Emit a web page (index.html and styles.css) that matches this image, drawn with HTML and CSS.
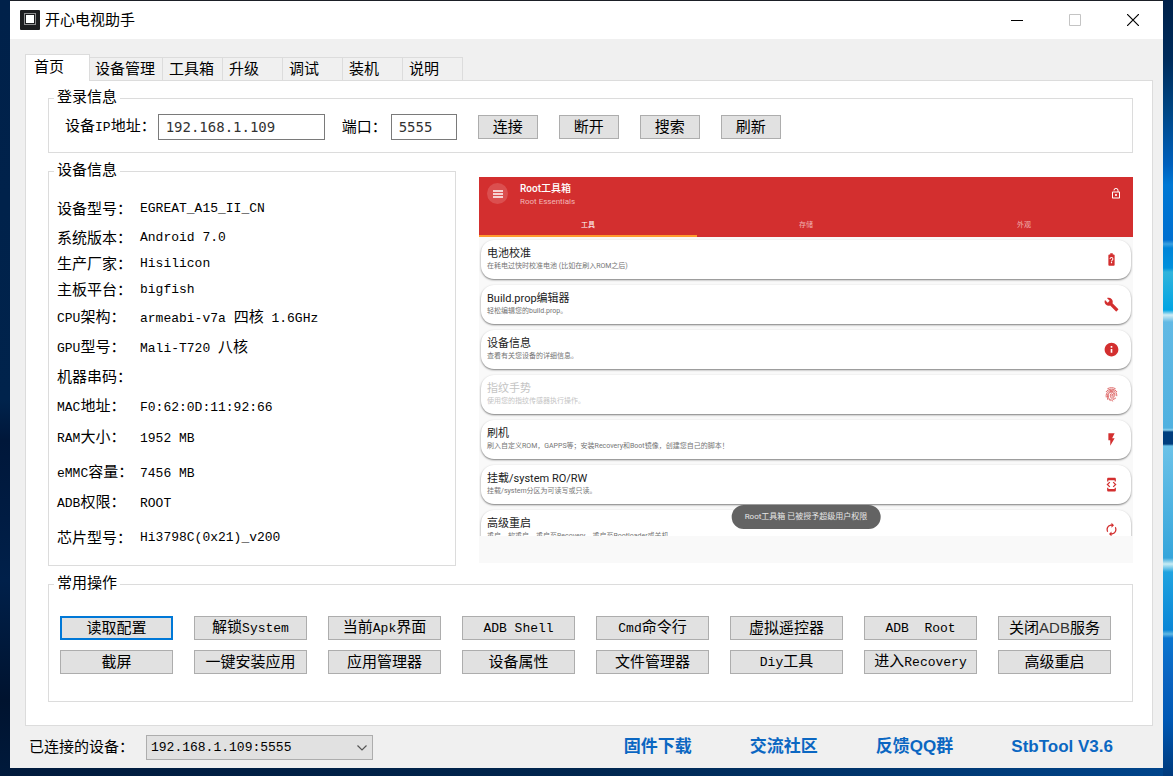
FILE: index.html
```html
<!DOCTYPE html>
<html lang="zh-CN">
<head>
<meta charset="utf-8">
<title>开心电视助手</title>
<link rel="stylesheet" href="styles.css">
</head>
<body>
<div class="window">
  <header class="titlebar">
    <svg class="app-icon" viewBox="0 0 20 20"><rect width="20" height="20" rx="1" fill="#1c1d1f"/><rect x="4.500" y="3.500" width="11" height="11" fill="none" stroke="#fff" stroke-dasharray="1 1"/><rect x="6" y="5" width="8" height="8" fill="#fff"/></svg>
    <h1>开心电视助手</h1>
    <div class="caption-buttons">
      <button aria-label="最小化"><svg viewBox="0 0 12 12"><path d="M0 6.5h12" stroke="#000"/></svg></button>
      <button aria-label="最大化" disabled><svg viewBox="0 0 12 12"><path d="M.5.5h11v11H.5z" stroke="#c4c4c4"/></svg></button>
      <button aria-label="关闭"><svg viewBox="0 0 12 12"><path d="M0 0l12 12M12 0L0 12" stroke="#000" stroke-width="1.2"/></svg></button>
    </div>
  </header>

  <nav class="tabs" role="tablist">
    <button class="tab active" role="tab" aria-selected="true">首页</button>
    <button class="tab wide" role="tab">设备管理</button>
    <button class="tab" role="tab">工具箱</button>
    <button class="tab" role="tab">升级</button>
    <button class="tab" role="tab">调试</button>
    <button class="tab" role="tab">装机</button>
    <button class="tab" role="tab">说明</button>
  </nav>

  <main class="page">
    <section class="group login">
      <h2 class="legend">登录信息</h2>
      <label for="ip">设备<span class="en">IP</span>地址：</label>
      <input id="ip" class="field ip" value="192.168.1.109">
      <label for="port">端口：</label>
      <input id="port" class="field port" value="5555">
      <div class="login-actions">
        <button class="btn">连接</button>
        <button class="btn">断开</button>
        <button class="btn">搜索</button>
        <button class="btn">刷新</button>
      </div>
    </section>

    <div class="middle">
      <section class="group device">
        <h2 class="legend">设备信息</h2>
        <dl class="info">
          <dt>设备型号：</dt><dd><span class="en">EGREAT_A15_II_CN</span></dd>
          <dt>系统版本：</dt><dd><span class="en">Android 7.0</span></dd>
          <dt>生产厂家：</dt><dd><span class="en">Hisilicon</span></dd>
          <dt>主板平台：</dt><dd><span class="en">bigfish</span></dd>
          <dt><span class="en">CPU</span>架构：</dt><dd><span class="en">armeabi-v7a </span>四核<span class="en"> 1.6GHz</span></dd>
          <dt><span class="en">GPU</span>型号：</dt><dd><span class="en">Mali-T720 </span>八核</dd>
          <dt>机器串码：</dt><dd></dd>
          <dt><span class="en">MAC</span>地址：</dt><dd><span class="en">F0:62:0D:11:92:66</span></dd>
          <dt><span class="en">RAM</span>大小：</dt><dd><span class="en">1952 MB</span></dd>
          <dt><span class="en">eMMC</span>容量：</dt><dd><span class="en">7456 MB</span></dd>
          <dt><span class="en">ADB</span>权限：</dt><dd><span class="en">ROOT</span></dd>
          <dt>芯片型号：</dt><dd><span class="en">Hi3798C(0x21)_v200</span></dd>
        </dl>
      </section>

      <section class="screen">
        <div class="app-bar">
          <div class="app-head">
            <span class="menu"><svg viewBox="0 0 10 10"><path d="M0 2h10M0 5h10M0 8h10" stroke="#fff" stroke-width="1.3"/></svg></span>
            <div class="app-name"><strong>Root工具箱</strong><span>Root Essentials</span></div>
            <svg class="lock" viewBox="0 0 24 24" fill="#fff"><path d="M12 17c1.1 0 2-.9 2-2s-.9-2-2-2-2 .9-2 2 .9 2 2 2zm6-9h-1V6c0-2.760-2.240-5-5-5S7 3.240 7 6h1.900c0-1.710 1.390-3.100 3.100-3.100 1.710 0 3.100 1.390 3.100 3.100v2H6c-1.100 0-2 .9-2 2v10c0 1.100.9 2 2 2h12c1.100 0 2-.9 2-2V10c0-1.100-.9-2-2-2zm0 12H6V10h12v10z"/></svg>
          </div>
          <div class="app-tabs"><span class="on">工具</span><span>存储</span><span>外观</span></div>
        </div>
        <div class="cards">
          <article class="card"><div><h3>电池校准</h3><p>在耗电过快时校准电池 (比如在刷入ROM之后)</p></div>
            <svg viewBox="0 0 24 24"><path d="M15.670 4H14V2h-4v2H8.330C7.600 4 7 4.600 7 5.330v15.330C7 21.400 7.600 22 8.330 22h7.330c.74 0 1.340-.6 1.340-1.330V5.330C17 4.600 16.400 4 15.670 4zm-2.720 13.950h-1.900v-1.900h1.900v1.900zm1.350-5.260s-.38.420-.67.710c-.48.480-.83 1.150-.83 1.600h-1.600c0-.83.460-1.520.93-2l.93-.94c.27-.27.440-.65.440-1.060 0-.83-.67-1.500-1.500-1.500s-1.500.67-1.500 1.500H9c0-1.660 1.340-3 3-3s3 1.340 3 3c0 .66-.27 1.260-.7 1.690z"/></svg></article>
          <article class="card"><div><h3>Build.prop编辑器</h3><p>轻松编辑您的build.prop。</p></div>
            <svg viewBox="0 0 24 24"><path d="M22.700 19l-9.100-9.100c.9-2.300.4-5-1.500-6.900-2-2-5-2.400-7.400-1.300L9 6 6 9 1.600 4.700C.4 7.100.9 10.100 2.900 12.100c1.900 1.900 4.600 2.400 6.900 1.500l9.100 9.100c.4.4 1 .4 1.400 0l2.300-2.300c.5-.4.500-1.100.1-1.400z"/></svg></article>
          <article class="card"><div><h3>设备信息</h3><p>查看有关您设备的详细信息。</p></div>
            <svg viewBox="0 0 24 24"><path d="M12 1C5.900 1 1 5.900 1 12s4.900 11 11 11 11-4.900 11-11S18.100 1 12 1zm1.300 16h-2.600v-6h2.600v6zm0-8h-2.600V6.500h2.600V9z"/></svg></article>
          <article class="card off"><div><h3>指纹手势</h3><p>使用您的指纹传感器执行操作。</p></div>
            <svg viewBox="0 0 24 24"><path fill="none" stroke="#d32f2f" stroke-width="1.600" stroke-linecap="round" d="M6 2.500C10 .5 14 .5 18 2.500M3.500 7.500c3.500-5.500 13.500-5.500 17 0M3.500 16C1 3 21 1 20.500 14M6 20C2 4 18 4 17.500 13c0 3-3 3-3.500 0-.5-3-4-3-4 0 0 4 2 6 6 7M10 22c-3-4-3.500-7-3-10 1-5 9-4.500 9 0M12.500 13c0 4 3 6 6 5M14 22.500c-1.500-.5-2.500-1.500-3.500-3"/></svg></article>
          <article class="card"><div><h3>刷机</h3><p>刷入自定义ROM，GAPPS等；安装Recovery和Boot镜像，创建您自己的脚本！</p></div>
            <svg viewBox="0 0 24 24"><path d="M7 2v11h3v9l7-12h-4l4-8z"/></svg></article>
          <article class="card"><div><h3>挂载/system RO/RW</h3><p>挂载/system分区为可读写或只读。</p></div>
            <svg viewBox="0 0 24 24"><path d="M7 5h10v2h2V3c0-1.100-.9-2-2-2H7c-1.100 0-2 .9-2 2v4h2V5zm8.410 11.590L20 12l-4.590-4.590L14 8.830 17.170 12 14 15.170l1.410 1.420zM10 15.170L6.830 12 10 8.830 8.590 7.410 4 12l4.590 4.590L10 15.170zM17 19H7v-2H5v4c0 1.100.9 2 2 2h10c1.100 0 2-.9 2-2v-4h-2v2z"/></svg></article>
          <article class="card"><div><h3>高级重启</h3><p>重启、软重启、重启至Recovery、重启至Bootloader或关机</p></div>
            <svg viewBox="0 0 24 24"><path d="M12 6v3l4-4-4-4v3c-4.420 0-8 3.580-8 8 0 1.570.46 3.030 1.240 4.260L6.700 14.800c-.45-.83-.7-1.790-.7-2.800 0-3.310 2.690-6 6-6zm6.760 1.740L17.300 9.200c.44.840.7 1.790.7 2.800 0 3.310-2.690 6-6 6v-3l-4 4 4 4v-3c4.420 0 8-3.580 8-8 0-1.570-.46-3.030-1.240-4.260z"/></svg></article>
        </div>
        <div class="toast">Root工具箱 已被授予超级用户权限</div>
      </section>
    </div>

    <section class="group ops">
      <h2 class="legend">常用操作</h2>
      <button class="btn focus">读取配置</button>
      <button class="btn">解锁<span class="en">System</span></button>
      <button class="btn">当前<span class="en">Apk</span>界面</button>
      <button class="btn"><span class="en">ADB Shell</span></button>
      <button class="btn"><span class="en">Cmd</span>命令行</button>
      <button class="btn">虚拟遥控器</button>
      <button class="btn"><span class="en">ADB&nbsp; Root</span></button>
      <button class="btn">关闭<span class="sans">ADB</span>服务</button>
      <button class="btn">截屏</button>
      <button class="btn">一键安装应用</button>
      <button class="btn">应用管理器</button>
      <button class="btn">设备属性</button>
      <button class="btn">文件管理器</button>
      <button class="btn"><span class="en">Diy</span>工具</button>
      <button class="btn">进入<span class="en">Recovery</span></button>
      <button class="btn">高级重启</button>
    </section>
  </main>

  <footer class="status">
    <label for="connected">已连接的设备：</label>
    <div class="select">
      <select id="connected"><option>192.168.1.109:5555</option></select>
      <svg viewBox="0 0 10 6"><path d="M.5.5L5 5 9.500.5" fill="none" stroke="#555" stroke-width="1.200"/></svg>
    </div>
    <nav class="links">
      <a href="#firmware">固件下载</a>
      <a href="#community">交流社区</a>
      <a href="#qq">反馈QQ群</a>
      <a href="#version">StbTool V3.6</a>
    </nav>
  </footer>
</div>
</body>
</html>
```
FILE: styles.css
```css
* { box-sizing: border-box; }

body {
  margin: 0;
  min-height: 100vh;
  padding: 1px 10px 9px;
  display: flex;
  font: 15px/20px "Liberation Sans", "Noto Sans CJK SC", sans-serif;
  color: #000;
  background:
    linear-gradient(#00214a 0, #002c5c 60px, #004684 110px, #0060bd 165px, #0078d4 185px, #006fd0 240px, #3aa0e0 244px, #0084d8 248px, #0090dc 268px, #30b4dc 272px, #00a4e3 310px, #d0ecf4 315px, #62b9e4 322px, #4fb1e0 428px, #8bd0ec 430px, #003e7d 432px, #003e7d 444px, #6bc2e8 446px, #35a5db 558px, #c8ecf4 564px, #20a3e0 572px, #0a86d6 630px, #60b8e4 634px, #0a76d0 638px, #0a63c0 680px, #0058b4 720px, #003a7c 776px) right / 10px 100% no-repeat,
    linear-gradient(#00214a, #00234c 400px, #00173a 440px, #00204a 580px, #00132f 700px, #001a3c) left / 10px 100% no-repeat,
    linear-gradient(90deg, #001a3c, #00264f 50%, #00458c) bottom / 100% 9px no-repeat,
    #1b1f26;
}

h1, h2, h3, p, dl, dd { margin: 0; font-size: inherit; font-weight: 400; }
button, input, select { font: inherit; color: inherit; margin: 0; }
button { padding: 0; }

.en { font-family: "Liberation Mono", monospace; font-size: 13px; white-space: pre; }
.sans { font-size: 15px; color: #333; }

.window { flex: 1; min-width: 0; display: flex; flex-direction: column; background: #f0f0f0; }

.titlebar { display: flex; align-items: center; height: 38px; padding-left: 10px; background: #fff; }
.app-icon { width: 20px; height: 20px; margin-right: 5px; }
.caption-buttons { display: flex; margin: 0 1px 0 auto; }
.caption-buttons button { width: 58px; height: 38px; border: 0; background: none; }
.caption-buttons svg { width: 12px; height: 12px; display: block; margin: auto; fill: none; }

.tabs { display: flex; align-items: flex-end; padding: 15px 0 0 15px; }
.tab {
  width: 60px; height: 23px; padding-left: 6px; text-align: left;
  border: 1px solid #dcdcdc; border-width: 1px 1px 0 0; background: #f0f0f0;
}
.tab.wide { width: 73px; padding-left: 5px; }
.tab.active {
  width: 65px; height: 27px; margin-bottom: -1px; padding: 0 0 2px 8px; position: relative;
  border-width: 1px 1px 0 1px; background: #fff;
}

.page {
  flex: 1; margin: 0 10px 0 15px; padding: 17px 19px 23px 22px;
  display: flex; flex-direction: column;
  background: #fff; border: 1px solid #dcdcdc;
}
.group { position: relative; border: 1px solid #dcdcdc; }
.legend { position: absolute; top: -12px; left: 5px; padding: 0 3px; background: #fff; }

.login { display: flex; align-items: center; height: 55px; padding: 2px 16px 0; }
.login label { white-space: nowrap; }
.field {
  height: 26px; padding: 0 7px; border: 1px solid #7a7a7a; background: #fff; color: #333;
  font: 14px "DejaVu Sans Mono", monospace;
}
.ip { width: 167px; margin: 0 17px 0 2px; }
.port { width: 66px; margin-left: 4px; }
.login-actions { display: flex; gap: 21px; margin-left: 21px; }
.login-actions .btn { width: 60px; }

.btn { height: 24px; border: 1px solid #adadad; background: #e1e1e1; white-space: nowrap; line-height: 20px; }
.btn.focus { border: 2px solid #0078d7; }

.middle { display: flex; align-items: flex-start; gap: 23px; margin-top: 18px; }
.device { width: 408px; height: 395px; padding: 19px 8px; }
.info {
  display: grid; align-items: end; grid-template-columns: 83px 1fr;
  grid-template-rows: 28px 29px 26px 26px 29px 30px 28px 31px 31px 35px 30px 34px;
}
.info dt { white-space: nowrap; }

.screen {
  position: relative; flex: 1; min-width: 0; margin-top: 6px; padding-bottom: 27px; background: #f9f9f9;
  font-family: Roboto, "Noto Sans CJK SC", sans-serif;
}
.app-bar { height: 60px; background: #d32f2f; color: #fff; display: flex; flex-direction: column; justify-content: space-between; }
.app-head { display: flex; align-items: flex-start; padding: 6px 11px 0 8px; }
.menu { width: 21px; height: 21px; border-radius: 50%; background: #db4f4f; display: grid; place-items: center; margin-right: 12px; }
.menu svg { width: 10px; height: 10px; }
.app-name { display: grid; }
.app-name strong { font-size: 10px; line-height: 12px; font-weight: 500; }
.app-name span { font-size: 8px; line-height: 13px; color: #f2b7b7; }
.lock { width: 12px; height: 21px; margin-left: auto; }
.app-tabs { display: grid; grid-template-columns: repeat(3, 1fr); text-align: center; font-size: 7px; line-height: 20px; color: #f0b0b0; }
.app-tabs span { border-bottom: 2px solid transparent; }
.app-tabs .on { color: #fff; border-color: #ff9a2e; }

.cards { height: 299px; overflow: hidden; padding: 3px 2px 0; display: flex; flex-direction: column; gap: 6px; }
.card {
  flex: none; height: 39px; padding: 0 12px 0 6px; border-radius: 13px; background: #fff;
  box-shadow: 0 1px 2px rgba(0, 0, 0, .5);
  display: flex; align-items: center; justify-content: space-between;
}
.card h3 { font-size: 11px; line-height: 14px; color: #212121; }
.card p { font-size: 7px; line-height: 11px; color: #757575; }
.card svg { width: 15px; height: 15px; fill: #d32f2f; }
.card.off h3, .card.off p { color: #c4c4c4; }
.card.off svg { opacity: .7; }
.toast {
  position: absolute; left: 50%; bottom: 34px; transform: translateX(-50%);
  padding: 0 13px; border-radius: 12px; background: #636363; color: #e6e6e6;
  font-size: 8px; line-height: 24px; white-space: nowrap;
}

.ops {
  height: 118px; margin-top: 18px; padding: 31px 21px 0 11px;
  display: grid; grid-template-columns: repeat(8, 113px); grid-auto-rows: 24px;
  row-gap: 10px; justify-content: space-between;
}

.status { display: flex; align-items: center; height: 42px; padding: 0 50px 0 19px; }
.select { position: relative; width: 227px; margin-left: 12px; }
.select select {
  width: 100%; height: 25px; padding: 0 4px; display: block; appearance: none;
  border: 1px solid #adadad; border-radius: 0; background: #e1e1e1;
  font: 13px "Liberation Mono", monospace;
}
.select svg { position: absolute; right: 6px; top: 10px; width: 10px; height: 6px; pointer-events: none; }
.links { display: flex; gap: 58px; margin-left: auto; }
.links a { color: #0b67c2; font-size: 17px; font-weight: 700; text-decoration: none; white-space: nowrap; }
```
